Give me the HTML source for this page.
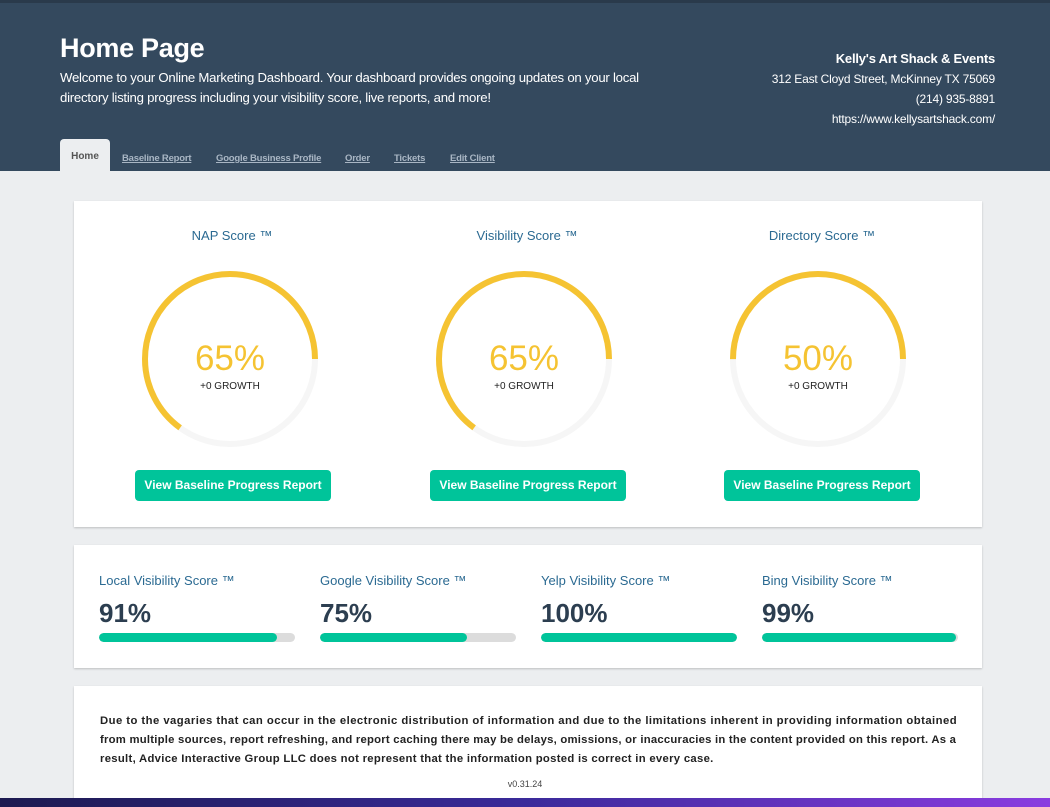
<!DOCTYPE html>
<html><head><meta charset="utf-8"><style>
*{margin:0;padding:0;box-sizing:border-box}
html,body{width:1050px;height:807px;overflow:hidden}
body{background:#eceef0;font-family:"Liberation Sans",sans-serif;position:relative}
.a{position:absolute}
#hdr{left:0;top:0;width:1050px;height:171px;background:#34495e;border-top:3px solid #2a3a4b}
h1{position:absolute;left:60px;top:30px;font-size:27px;color:#fff;font-weight:bold;letter-spacing:-0.3px}
.wel{left:60px;top:65px;width:622px;color:#fff;font-size:13.2px;line-height:20px;letter-spacing:-0.25px}
.info{right:55px;top:46px;text-align:right;color:#fff;font-size:12px;line-height:20px;letter-spacing:-0.2px}
.tab{top:150px;font-size:9.5px;font-weight:bold;color:#a9b6c4;text-decoration:underline;letter-spacing:-0.2px}
.card{background:#fff;box-shadow:0 1px 2px rgba(0,0,0,.2);left:74px;width:908px}
.gl{color:#2b6a92;font-size:13px;width:200px;text-align:center;top:228px}
.pct{font-size:35px;color:#f5c332;width:200px;text-align:center;top:339px}
.gr{font-size:10px;color:#222;width:200px;text-align:center;top:381px}
.btn{top:470px;width:196px;height:31px;background:#00c49a;color:#fff;border-radius:4px;font-weight:bold;font-size:12px;text-align:center;line-height:31px}
.sl{top:573px;color:#2b6a92;font-size:13px}
.sn{top:598px;font-size:26px;font-weight:bold;color:#2c3e50}
.bar{top:633px;width:196px;height:9px;border-radius:5px;background:#dcdcdc;overflow:hidden}
.bar div{height:9px;background:#00c49a;border-radius:5px}
</style></head><body>
<div id="hdr" class="a">
<h1>Home Page</h1>
<div class="a wel">Welcome to your Online Marketing Dashboard. Your dashboard provides ongoing updates on your local directory listing progress including your visibility score, live reports, and more!</div>
<div class="a info"><b style="font-size:13px">Kelly's Art Shack &amp; Events</b><br>312 East Cloyd Street, McKinney TX 75069<br>(214) 935-8891<br>https://www.kellysartshack.com/</div>
<div class="a" style="left:60px;top:136px;width:50px;height:32px;background:#eceef0;border-radius:4px 4px 0 0;font-size:10px;font-weight:bold;color:#555;text-align:center;line-height:36px">Home</div>
<div class="a tab" style="left:122px">Baseline Report</div>
<div class="a tab" style="left:216px">Google Business Profile</div>
<div class="a tab" style="left:345px">Order</div>
<div class="a tab" style="left:394px">Tickets</div>
<div class="a tab" style="left:450px">Edit Client</div>
</div>
<div class="a card" style="top:201px;height:326px"></div>
<div class="a card" style="top:545px;height:123px"></div>
<div class="a card" style="top:686px;height:121px"></div>
<svg class="a" style="left:0;top:0" width="1050" height="807">
<g fill="none" stroke-width="6">
<circle cx="230" cy="359" r="85" stroke="#f6f6f6"/>
<circle cx="524" cy="359" r="85" stroke="#f6f6f6"/>
<circle cx="818" cy="359" r="85" stroke="#f6f6f6"/>
<circle cx="230" cy="359" r="85" stroke="#f5c332" stroke-dasharray="347.1 1000" transform="translate(0 718) scale(1 -1)"/>
<circle cx="524" cy="359" r="85" stroke="#f5c332" stroke-dasharray="347.1 1000" transform="translate(0 718) scale(1 -1)"/>
<circle cx="818" cy="359" r="85" stroke="#f5c332" stroke-dasharray="267 1000" transform="translate(0 718) scale(1 -1)"/>
</g></svg>
<div class="a gl" style="left:132px">NAP Score ™</div>
<div class="a gl" style="left:427px">Visibility Score ™</div>
<div class="a gl" style="left:722px">Directory Score ™</div>
<div class="a pct" style="left:130px">65%</div>
<div class="a pct" style="left:424px">65%</div>
<div class="a pct" style="left:718px">50%</div>
<div class="a gr" style="left:130px">+0 GROWTH</div>
<div class="a gr" style="left:424px">+0 GROWTH</div>
<div class="a gr" style="left:718px">+0 GROWTH</div>
<div class="a btn" style="left:135px">View Baseline Progress Report</div>
<div class="a btn" style="left:430px">View Baseline Progress Report</div>
<div class="a btn" style="left:724px">View Baseline Progress Report</div>
<div class="a sl" style="left:99px">Local Visibility Score ™</div>
<div class="a sl" style="left:320px">Google Visibility Score ™</div>
<div class="a sl" style="left:541px">Yelp Visibility Score ™</div>
<div class="a sl" style="left:762px">Bing Visibility Score ™</div>
<div class="a sn" style="left:99px">91%</div>
<div class="a sn" style="left:320px">75%</div>
<div class="a sn" style="left:541px">100%</div>
<div class="a sn" style="left:762px">99%</div>
<div class="a bar" style="left:99px"><div style="width:91%"></div></div>
<div class="a bar" style="left:320px"><div style="width:75%"></div></div>
<div class="a bar" style="left:541px"><div style="width:100%"></div></div>
<div class="a bar" style="left:762px"><div style="width:99%"></div></div>
<div class="a" style="left:100px;top:712px;font-size:11.3px;font-weight:bold;line-height:19px;color:#222;white-space:nowrap">
<div style="letter-spacing:0.45px">Due to the vagaries that can occur in the electronic distribution of information and due to the limitations inherent in providing information obtained</div>
<div style="letter-spacing:0.24px">from multiple sources, report refreshing, and report caching there may be delays, omissions, or inaccuracies in the content provided on this report. As a</div>
<div style="letter-spacing:0.3px">result, Advice Interactive Group LLC does not represent that the information posted is correct in every case.</div></div>
<div class="a" style="left:0;width:1050px;top:779px;text-align:center;font-size:9px;color:#444">v0.31.24</div>
<div class="a" style="left:0;top:798px;width:1050px;height:9px;background:linear-gradient(90deg,#1c1a50,#3a2a9a 50%,#8a3ce0)"></div>
</body></html>
